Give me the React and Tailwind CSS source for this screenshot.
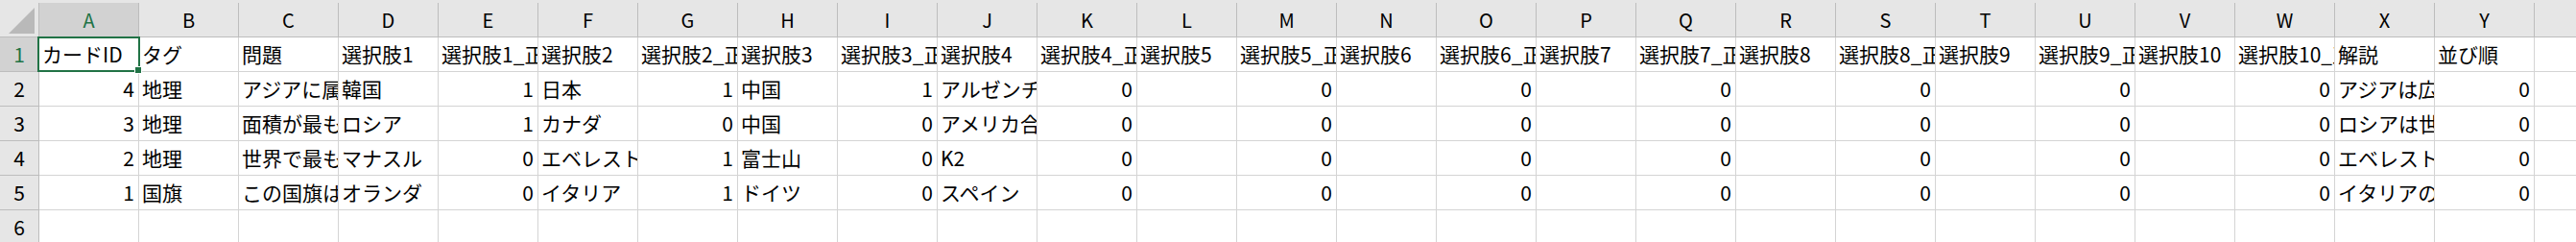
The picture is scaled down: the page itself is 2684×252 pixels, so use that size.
const letters = 'ABCDEFGHIJKLMNOPQRSTUVWXYZ'.split('');

// 1 行目は見出し、以降はデータ。数値は右寄せ
const header = [
  'カードID', 'タグ', '問題', '選択肢1', '選択肢1_正解', '選択肢2', '選択肢2_正解',
  '選択肢3', '選択肢3_正解', '選択肢4', '選択肢4_正解', '選択肢5', '選択肢5_正解',
  '選択肢6', '選択肢6_正解', '選択肢7', '選択肢7_正解', '選択肢8', '選択肢8_正解',
  '選択肢9', '選択肢9_正解', '選択肢10', '選択肢10_正解', '解説', '並び順', '',
];

const blanks = ['', 0, '', 0, '', 0, '', 0, '', 0, '', 0];

const rows = [
  [4, '地理', 'アジアに属する国はどれ？', '韓国', 1, '日本', 1, '中国', 1, 'アルゼンチン', 0, ...blanks, 'アジアは広い地域です。', 0, ''],
  [3, '地理', '面積が最も大きい国は？', 'ロシア', 1, 'カナダ', 0, '中国', 0, 'アメリカ合衆国', 0, ...blanks, 'ロシアは世界最大の国です。', 0, ''],
  [2, '地理', '世界で最も高い山は？', 'マナスル', 0, 'エベレスト', 1, '富士山', 0, 'K2', 0, ...blanks, 'エベレストは世界最高峰です。', 0, ''],
  [1, '国旗', 'この国旗はどこの国？', 'オランダ', 0, 'イタリア', 1, 'ドイツ', 0, 'スペイン', 0, ...blanks, 'イタリアの国旗です。', 0, ''],
];

function Cell({ value }) {
  const isNum = typeof value === 'number';
  return (
    <div
      className={`w-[104px] shrink-0 h-full border-r border-b border-[#d4d4d4] overflow-hidden whitespace-nowrap flex items-center ${
        isNum ? 'justify-end pr-[4px]' : 'pl-[3px]'
      }`}
    >
      {value}
    </div>
  );
}

function RowHead({ n, active }) {
  return (
    <div
      className={`w-[41px] shrink-0 h-full border-r border-b border-[#bdbdbd] flex items-center justify-center ${
        active ? 'bg-[#d2d2d2] text-[#217346]' : 'bg-[#e6e6e6]'
      }`}
    >
      {n}
    </div>
  );
}

export default function App() {
  return (
    <div className="relative w-full h-[252px] overflow-hidden bg-white text-black text-[21px] font-['Noto_Sans_CJK_JP','Noto_Sans',sans-serif]">
      {/* column headers */}
      <div className="flex h-[39px] bg-[#e6e6e6] pt-[3px]">
        <div className="w-[41px] shrink-0 h-full border-r border-b border-[#bdbdbd] flex items-end justify-end pr-[4px] pb-[3px]">
          <svg width="27" height="27" viewBox="0 0 27 27">
            <polygon points="27,0 27,27 0,27" fill="#b9b9b9" />
          </svg>
        </div>
        {letters.map((l) => (
          <div
            key={l}
            className={`w-[104px] shrink-0 h-full border-r border-b border-[#bdbdbd] flex items-center justify-center text-[20px] ${
              l === 'A' ? 'bg-[#d2d2d2] text-[#217346]' : ''
            }`}
          >
            {l}
          </div>
        ))}
      </div>

      {/* row 1: field names */}
      <div className="flex h-[36px]">
        <RowHead n={1} active />
        {header.map((h, i) => (
          <Cell key={i} value={h} />
        ))}
      </div>

      {rows.map((r, ri) => (
        <div key={ri} className="flex h-[36px]">
          <RowHead n={ri + 2} />
          {r.map((v, i) => (
            <Cell key={i} value={v} />
          ))}
        </div>
      ))}

      <div className="flex h-[36px]">
        <RowHead n={6} />
        {letters.map((l) => (
          <Cell key={l} value="" />
        ))}
      </div>

      {/* active cell A1 */}
      <div className="absolute left-[39px] top-[38px] w-[107px] h-[37px] border-2 border-[#217346] pointer-events-none" />
      <div className="absolute left-[140px] top-[69px] w-[8px] h-[8px] bg-[#217346] border border-white pointer-events-none" />
    </div>
  );
}
